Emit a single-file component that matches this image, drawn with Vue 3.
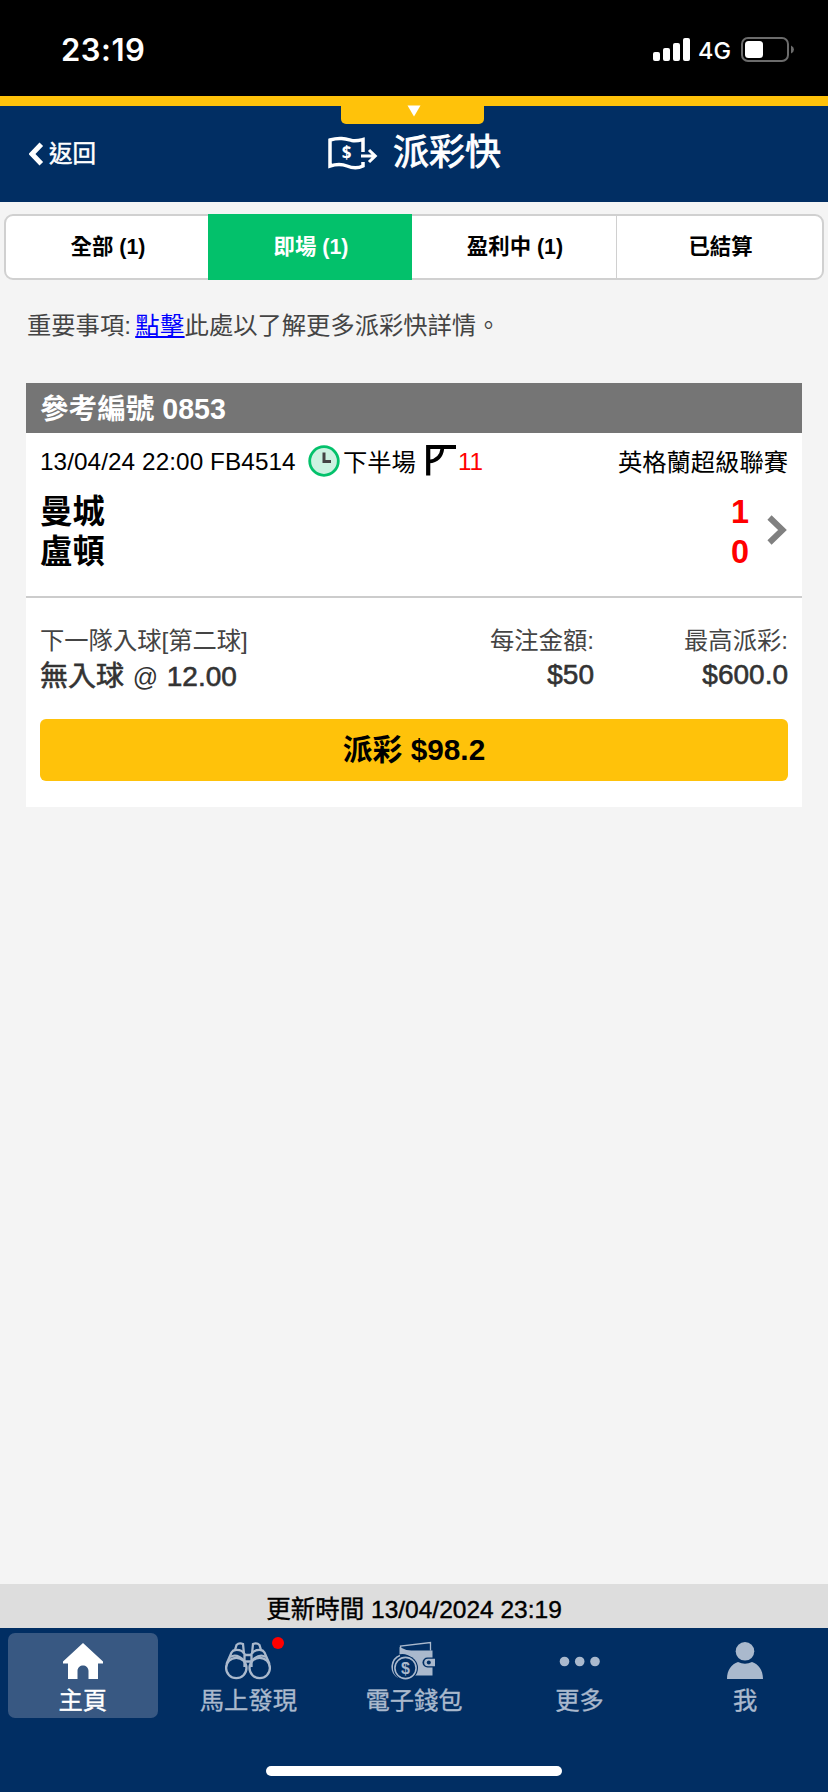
<script setup>
const tabs = [
  { label: '全部 (1)' },
  { label: '即場 (1)', active: true },
  { label: '盈利中 (1)' },
  { label: '已結算' },
]
const teams = [
  { name: '曼城', score: 1 },
  { name: '盧頓', score: 0 },
]
</script>

<template>
  <div class="screen">
    <div class="status">
      <span class="time">23:19</span>
      <div class="status-right">
        <svg class="signal" width="37" height="24" viewBox="0 0 37 24" fill="#fff">
          <rect x="0" y="14" width="7" height="9" rx="2" />
          <rect x="10" y="10" width="7" height="13" rx="2" />
          <rect x="20" y="5" width="7" height="18" rx="2" />
          <rect x="30" y="0" width="7" height="23" rx="2" />
        </svg>
        <span class="net">4G</span>
        <svg class="battery" width="54" height="26" viewBox="0 0 54 26">
          <rect x="1" y="1" width="46" height="23" rx="6" fill="none" stroke="#6b6b6b" stroke-width="2" />
          <rect x="4" y="4" width="18" height="17" rx="3.5" fill="#fff" />
          <path d="M50 8.5 Q53 10 53 12.5 Q53 15 50 16.5 Z" fill="#6b6b6b" />
        </svg>
      </div>
    </div>

    <header class="header">
      <div class="pull">
        <svg width="14" height="12" viewBox="0 0 14 12"><path d="M0.5 0.5 H13.5 L7 11.5 Z" fill="#fff" /></svg>
      </div>
      <div class="back">
        <svg width="15" height="24" viewBox="0 0 15 24"><path d="M12.3 2.3 L3 12 L12.3 21.7" fill="none" stroke="#fff" stroke-width="5" /></svg>
        <span>返回</span>
      </div>
      <div class="title">
        <svg width="50" height="34" viewBox="0 0 50 34" fill="none" stroke="#fff">
          <path d="M35 16 V3.5 C31 4.5 28 5.3 24 4.5 C18 3 12 1 2 4 V30 C10 27.5 14 28 19 30 C25 32.5 30 32.5 35 30 V26" stroke-width="3.5" />
          <path d="M33 20 H47 M41 14 L47.2 20 L41 26" stroke-width="3.1" />
          <text x="18.7" y="22.8" class="bill" text-anchor="middle" fill="#fff" stroke="none">$</text>
        </svg>
        <h1>派彩快</h1>
      </div>
    </header>

    <nav class="tabs">
      <div v-for="t in tabs" :key="t.label" class="tab" :class="{ active: t.active }">{{ t.label }}</div>
    </nav>

    <p class="notice">重要事項: <a>點擊</a>此處以了解更多派彩快詳情。</p>

    <section class="card">
      <div class="ref">參考編號 0853</div>
      <div class="match">
        <div class="meta">
          <span class="date">13/04/24 22:00 FB4514</span>
          <svg class="clock" width="32" height="32" viewBox="0 0 32 32">
            <circle cx="16" cy="16" r="14.3" fill="#ccf2e1" stroke="#03c16b" stroke-width="2.8" />
            <path d="M16 7.5 V16.5 H23" fill="none" stroke="#444" stroke-width="3" />
          </svg>
          <span class="cjk">下半場</span>
          <svg class="flag" width="30" height="31" viewBox="0 0 30 31" fill="none" stroke="#000">
            <path d="M2.2 30.5 V2 H30" stroke-width="4.2" />
            <path d="M3 16.5 C11 16 15.5 11 16.5 3" stroke-width="3.6" />
          </svg>
          <span class="corners">11</span>
          <span class="league cjk">英格蘭超級聯賽</span>
        </div>
        <div class="teams">
          <div class="team-list">
            <div v-for="t in teams" :key="t.name" class="team">
              <span>{{ t.name }}</span><b>{{ t.score }}</b>
            </div>
          </div>
          <svg class="go" width="20" height="30" viewBox="0 0 20 30"><path d="M2.5 2.5 L15.5 15 L2.5 27.5" fill="none" stroke="#808080" stroke-width="6" /></svg>
        </div>
      </div>
      <div class="bet">
        <div class="cell">
          <div class="label">下一隊入球[第二球]</div>
          <div class="value pick">無入球 <span class="at">@</span> 12.00</div>
        </div>
        <div class="cell stake">
          <div class="label">每注金額:</div>
          <div class="value">$50</div>
        </div>
        <div class="cell payout">
          <div class="label">最高派彩:</div>
          <div class="value">$600.0</div>
        </div>
      </div>
      <div class="cashout">派彩 $98.2</div>
    </section>

    <div class="spacer"></div>
    <div class="updated">更新時間 13/04/2024 23:19</div>

    <footer class="bottom">
      <div class="items">
        <div class="item on">
          <div class="ico">
            <svg width="40" height="36" viewBox="0 0 40 36"><path d="M20 0 L40 18.5 V20.5 H35 V36 H25.5 V28 C25.5 20.5 14.5 20.5 14.5 28 V36 H5 V20.5 H0 V18.5 Z" fill="#fff" /></svg>
          </div>
          <span>主頁</span>
        </div>
        <div class="item">
          <div class="ico">
            <svg width="48" height="38" viewBox="0 0 48 38" fill="none" stroke="#aab9cd" stroke-width="2.3">
              <circle cx="12.3" cy="26" r="10.2" />
              <circle cx="35.7" cy="26" r="10.2" />
              <path d="M2.5 22 L7.5 10.5 Q9 8 11.5 8 Q18 7.5 20.5 12 V25 M45.5 22 L40.5 10.5 Q39 8 36.5 8 Q30 7.5 27.5 12 V25" />
              <path d="M11 8 L12.5 3 Q15 0.5 19 2 L20 12 M37 8 L35.5 3 Q33 0.5 29 2 L28 12" />
              <path d="M6 15 Q13 11 20.5 19 M42 15 Q35 11 27.5 19 M20.5 13 H27.5 M20.5 19.5 H27.5" />
            </svg>
            <i class="dot"></i>
          </div>
          <span>馬上發現</span>
        </div>
        <div class="item">
          <div class="ico">
            <svg width="46" height="40" viewBox="0 0 46 40">
              <path d="M10 9.5 L9.5 5 L39.5 1.5 V9.5" fill="none" stroke="#aab9cd" stroke-width="1.3" />
              <path d="M8.5 6 Q15 9.7 21 9.5 H41.5 V34.5 H8.5 Z" fill="#aab9cd" />
              <rect x="31.5" y="16.5" width="15" height="10" rx="5" fill="#012e63" />
              <path d="M44 17.7 H37 A3.8 3.8 0 0 0 37 25.3 H44 Z" fill="#aab9cd" />
              <circle cx="37.8" cy="21.5" r="2" fill="#012e63" />
              <circle cx="11.5" cy="25.5" r="12.5" fill="#012e63" />
              <path d="M9 14.5 A12 12 0 0 0 7 36" fill="none" stroke="#aab9cd" stroke-width="1.6" />
              <circle cx="14.5" cy="27" r="12.5" fill="#012e63" />
              <circle cx="14.5" cy="27" r="10.6" fill="none" stroke="#aab9cd" stroke-width="1.6" />
              <text x="14.5" y="32.8" class="coin" text-anchor="middle" fill="#aab9cd">$</text>
            </svg>
          </div>
          <span>電子錢包</span>
        </div>
        <div class="item">
          <div class="ico">
            <svg width="42" height="36" viewBox="0 0 42 36" fill="#aab9cd">
              <circle cx="5.5" cy="18.5" r="4.8" /><circle cx="20.7" cy="18.5" r="4.8" /><circle cx="36" cy="18.5" r="4.8" />
            </svg>
          </div>
          <span>更多</span>
        </div>
        <div class="item">
          <div class="ico">
            <svg width="36" height="37" viewBox="0 0 36 37" fill="#aab9cd">
              <circle cx="18" cy="9.3" r="9.3" />
              <path d="M0 37 C0 28 4.5 22 11 20 Q18 23.5 25 20 C31.5 22 36 28 36 37 Z" />
            </svg>
          </div>
          <span>我</span>
        </div>
      </div>
      <div class="indicator"></div>
    </footer>
  </div>
</template>

<style>
body {
  background: #f4f4f4;
}
</style>

<style scoped>
.screen {
  width: 828px;
  height: 1792px;
  display: flex;
  flex-direction: column;
  background: #f4f4f4;
  font-family: "Liberation Sans", "Noto Sans CJK TC", sans-serif;
  font-size: 24.3px;
  color: #000;
  overflow: hidden;
  white-space: nowrap;
}
svg {
  display: block;
  flex: none;
}
.status {
  flex: none;
  height: 96px;
  background: #000;
  color: #fff;
  display: flex;
  justify-content: space-between;
  padding: 0 33px 0 61px;
}
.time {
  font: 600 31px/100px Inter, sans-serif;
  letter-spacing: 0.5px;
}
.status-right {
  display: flex;
  align-items: flex-start;
}
.signal {
  margin-top: 38px;
}
.net {
  font: 500 23.5px/102px Inter, sans-serif;
  width: 51px;
  padding-left: 8px;
  box-sizing: border-box;
}
.battery {
  margin-top: 37px;
}
.header {
  flex: none;
  position: relative;
  height: 96px;
  border-top: 10px solid #ffc20a;
  background: #012e63;
  color: #fff;
}
.pull {
  position: absolute;
  top: 0;
  left: 341px;
  width: 143px;
  height: 18px;
  border-radius: 0 0 5px 5px;
  background: #ffc20a;
  display: flex;
  justify-content: center;
}
.pull svg {
  margin: -1px 0 0 3px;
}
.back {
  position: absolute;
  left: 29px;
  top: 36px;
  height: 24px;
  display: flex;
  align-items: center;
  gap: 5px;
  font-size: 23.5px;
  -webkit-text-stroke: 0.5px #fff;
}
.back span {
  margin-top: -4px;
}
.title {
  height: 96px;
  display: flex;
  justify-content: center;
  align-items: center;
  gap: 15px;
  padding-left: 1px;
}
.title svg {
  margin-bottom: 3px;
}
.bill {
  font: bold 17px "Open Sans", sans-serif;
}
h1 {
  margin: -3px 0 0;
  font-size: 36px;
  font-weight: 400;
  line-height: 93px;
  -webkit-text-stroke: 0.9px #fff;
}
.tabs {
  flex: none;
  display: grid;
  grid-template-columns: 202px 204px 204px 1fr;
  grid-template-rows: 62px;
  height: 66px;
  margin: 12px 4px 0;
  box-sizing: border-box;
  border: 2px solid #d0d0d0;
  border-radius: 9px;
  background: #fff;
}
.tab {
  padding-left: 2px;
  text-align: center;
  font-size: 21.4px;
  line-height: 63px;
  font-weight: 700;
}
.tab:last-child {
  border-left: 1px solid #d0d0d0;
}
.tab.active {
  background: #03c16b;
  color: #fff;
  margin: -2px 0;
  line-height: 67px;
}
.notice {
  margin: 26px 27px 0;
  height: 40px;
  line-height: 40px;
  color: #444;
  word-spacing: -2.5px;
}
.notice a {
  color: #00f;
  text-decoration: underline;
  letter-spacing: 0.4px;
}
.card {
  flex: none;
  margin: 37px 26px 0;
  height: 424px;
  background: #fff;
}
.ref {
  height: 50px;
  padding-left: 14px;
  background: #757575;
  color: #fff;
  font-size: 28.6px;
  font-weight: 700;
  line-height: 53px;
}
.match {
  height: 163px;
  border-bottom: 2px solid #ccc;
}
.meta {
  display: flex;
  align-items: center;
  height: 58px;
  padding: 0 14px;
}
.cjk {
  margin-top: -4px;
}
.date {
  width: 268px;
  letter-spacing: 0.08px;
}
.clock {
  margin: -2px 3px 0 0;
}
.flag {
  margin: -4px 2px 0 10px;
}
.corners {
  color: #f00;
}
.league {
  margin-left: auto;
}
.teams {
  display: flex;
  align-items: center;
  padding: 0 15px 0 14px;
}
.team-list {
  flex: 1;
  padding-top: 2px;
}
.team {
  display: flex;
  justify-content: space-between;
  height: 39.5px;
  line-height: 39.5px;
  font-size: 32.4px;
  font-weight: 700;
}
.team b {
  color: #f00;
}
.go {
  margin: -3px 0 0 18px;
}
.bet {
  display: flex;
  justify-content: flex-end;
  height: 121px;
  padding: 26px 14px 0;
  box-sizing: border-box;
  color: #444;
}
.cell:first-child {
  margin-right: auto;
}
.payout {
  width: 194px;
}
.stake,
.payout {
  text-align: right;
}
.label {
  height: 34px;
  line-height: 34px;
}
.value {
  height: 36px;
  line-height: 33px;
  font-size: 28px;
  color: #333;
  -webkit-text-stroke: 0.6px #333;
}
.pick {
  line-height: 37px;
  word-spacing: 0.9px;
}
.at {
  font-size: 25px;
  -webkit-text-stroke: 0;
}
.cashout {
  margin: 0 14px;
  height: 62px;
  border-radius: 6px;
  background: #ffc20a;
  text-align: center;
  font-size: 29.8px;
  font-weight: 700;
  line-height: 62px;
}
.spacer {
  flex: 1;
}
.updated {
  flex: none;
  height: 44px;
  background: #ddd;
  text-align: center;
  font-size: 24.5px;
  line-height: 52px;
  -webkit-text-stroke: 0.4px #000;
}
.bottom {
  flex: none;
  height: 164px;
  background: #012e63;
  color: #aab9cd;
  display: flex;
  flex-direction: column;
}
.items {
  display: grid;
  grid-template-columns: repeat(5, 1fr);
  padding-top: 5px;
}
.item {
  height: 85px;
  margin: 0 8px;
  border-radius: 7px;
  display: flex;
  flex-direction: column;
  align-items: center;
  -webkit-text-stroke: 0.35px currentColor;
}
.item.on {
  background: #385882;
  color: #fff;
}
.item span {
  line-height: 30px;
}
.ico {
  position: relative;
  height: 51px;
  padding-top: 2px;
  display: flex;
  align-items: center;
}
.dot {
  position: absolute;
  right: -12px;
  top: 4px;
  width: 12px;
  height: 12px;
  border-radius: 50%;
  background: #f00;
}
.coin {
  font: bold 16px "Liberation Sans", sans-serif;
  -webkit-text-stroke: 0;
}
.indicator {
  width: 296px;
  height: 10px;
  border-radius: 5px;
  margin: 48px auto 0;
  background: #fff;
}
</style>
